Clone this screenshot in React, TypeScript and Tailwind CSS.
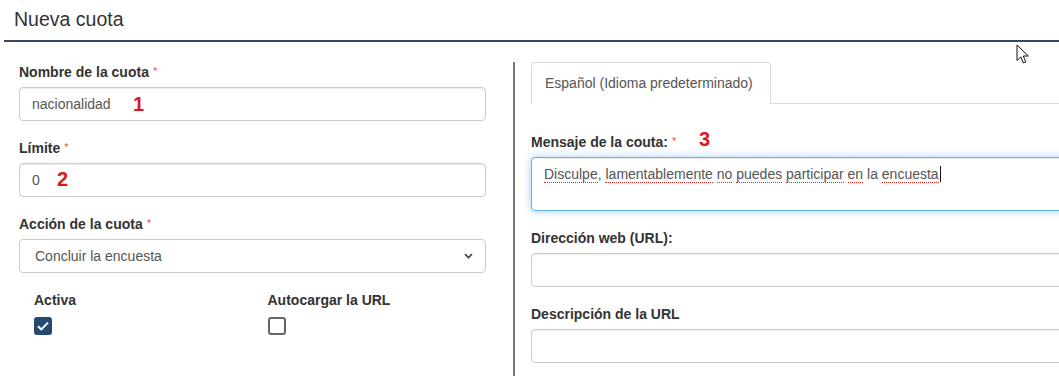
import React from "react";

const Asterisk = () => (
  <span className="ml-[4px] align-top text-[11px] font-normal leading-[18px] text-[#d9534f]">*</span>
);

const Label = ({ children, req }: { children: React.ReactNode; req?: boolean }) => (
  <div className="mb-[5px] h-[20px] whitespace-nowrap text-[14px] font-bold leading-[20px] text-[#333]">
    {children}
    {req && <Asterisk />}
  </div>
);

const Mark = ({ n, className }: { n: string; className: string }) => (
  <span className={"absolute text-[20px] font-bold leading-[20px] text-[#e0161e] " + className}>{n}</span>
);

const Input = ({ value, children, wide }: { value?: string; children?: React.ReactNode; wide?: boolean }) => (
  <div
    className={
      "relative flex h-[34px] items-center rounded-[4px] border border-[#ccc] bg-white px-[12px] text-[14px] text-[#555] shadow-[inset_0_1px_1px_rgba(0,0,0,0.075)] " +
      (wide ? "w-[600px]" : "w-full")
    }
  >
    {value}
    {children}
  </div>
);

const Spell = ({ children }: { children: React.ReactNode }) => (
  <span className="border-b border-dotted border-[#e02424] leading-[16px]">{children}</span>
);

export default function App() {
  return (
    <div className="relative h-[376px] w-[1059px] overflow-hidden bg-white font-['Liberation_Sans',Arial,sans-serif] text-[14px] text-[#333]">
      <header className="ml-[4px] flex h-[42px] items-center border-b-2 border-[#2e4b62] pl-[10px]">
        <h1 className="text-[19.5px] font-normal leading-none text-[#333]">Nueva cuota</h1>
      </header>

      <div className="flex h-[334px]">
        {/* Left column */}
        <div className="w-[486px] shrink-0 pl-[19px] pt-[20px]">
          <div className="mb-[17px]">
            <Label req>Nombre de la cuota</Label>
            <Input value="nacionalidad">
              <Mark n="1" className="left-[113px] top-[6px]" />
            </Input>
          </div>
          <div className="mb-[17px]">
            <Label req>Límite</Label>
            <Input value="0">
              <Mark n="2" className="left-[37px] top-[5px]" />
            </Input>
          </div>
          <div className="mb-[17px]">
            <Label req>Acción de la cuota</Label>
            <div className="flex h-[34px] items-center justify-between rounded-[4px] border border-[#ccc] bg-white pl-[15px] pr-[12px] text-[14px] text-[#555]">
              <span>Concluir la encuesta</span>
              <svg width="9" height="6" viewBox="0 0 9 6" fill="none">
                <path d="M1 1.2 L4.5 4.6 L8 1.2" stroke="#444" strokeWidth="1.7" />
              </svg>
            </div>
          </div>
          <div className="grid grid-cols-2">
            <div className="pl-[15px]">
              <div className="h-[20px] text-[14px] font-bold leading-[20px] text-[#333]">Activa</div>
              <div className="mt-[7px] flex h-[18px] w-[18px] items-center justify-center rounded-[3px] bg-[#244a72]">
                <svg width="14" height="12" viewBox="0 0 14 12" fill="none">
                  <path d="M2 6.3 L5.3 9.4 L12 2.6" stroke="#fff" strokeWidth="2" />
                </svg>
              </div>
            </div>
            <div className="pl-[15px]">
              <div className="h-[20px] text-[14px] font-bold leading-[20px] text-[#333]">Autocargar la URL</div>
              <div className="mt-[7px] h-[18px] w-[18px] rounded-[3px] border-2 border-[#666] bg-white" />
            </div>
          </div>
        </div>

        {/* Divider */}
        <div className="ml-[27px] mt-[20px] w-[2px] shrink-0 bg-[#777]" />

        {/* Right column */}
        <div className="ml-[16px] min-w-0 flex-1 pt-[20px]">
          <div className="flex h-[42px]">
            <div className="flex h-[42px] w-[240px] shrink-0 items-center rounded-t-[4px] border border-b-0 border-[#ddd] bg-white pl-[13px] text-[14px] text-[#555]">
              Español (Idioma predeterminado)
            </div>
            <div className="flex-1 border-b border-[#ddd]" />
          </div>

          <div className="mt-[28px] mb-[17px]">
            <div className="relative">
              <Label req>Mensaje de la couta:</Label>
              <Mark n="3" className="left-[168px] top-[-3px]" />
            </div>
            <div className="h-[54px] w-[600px] rounded-[4px] border border-[#66afe9] bg-white px-[12px] pt-[6px] text-[14px] leading-[20px] text-[#555] shadow-[inset_0_1px_1px_rgba(0,0,0,0.075),0_0_8px_rgba(102,175,233,0.6)]">
              <Spell>Disculpe</Spell>, <Spell>lamentablemente</Spell> <Spell>no</Spell> <Spell>puedes</Spell>{" "}
              <Spell>participar</Spell> <Spell>en</Spell> la <Spell>encuesta</Spell>
              <span className="ml-[1px] inline-block h-[16px] w-[1px] bg-[#111] align-[-3px]" />
            </div>
          </div>

          <div className="mb-[17px]">
            <Label>Dirección web (URL):</Label>
            <Input wide />
          </div>
          <div className="mb-[17px]">
            <Label>Descripción de la URL</Label>
            <Input wide />
          </div>
        </div>
      </div>

      {/* Mouse pointer */}
      <svg className="absolute left-[1016px] top-[44px]" width="14" height="21" viewBox="0 0 14 21" fill="none">
        <path
          d="M1 1 L1 16.5 L4.8 12.9 L7.4 19 L9.8 18 L7.3 12 L12.3 12 Z"
          fill="#fff"
          stroke="#111"
          strokeWidth="1"
          strokeLinejoin="round"
        />
      </svg>
    </div>
  );
}
